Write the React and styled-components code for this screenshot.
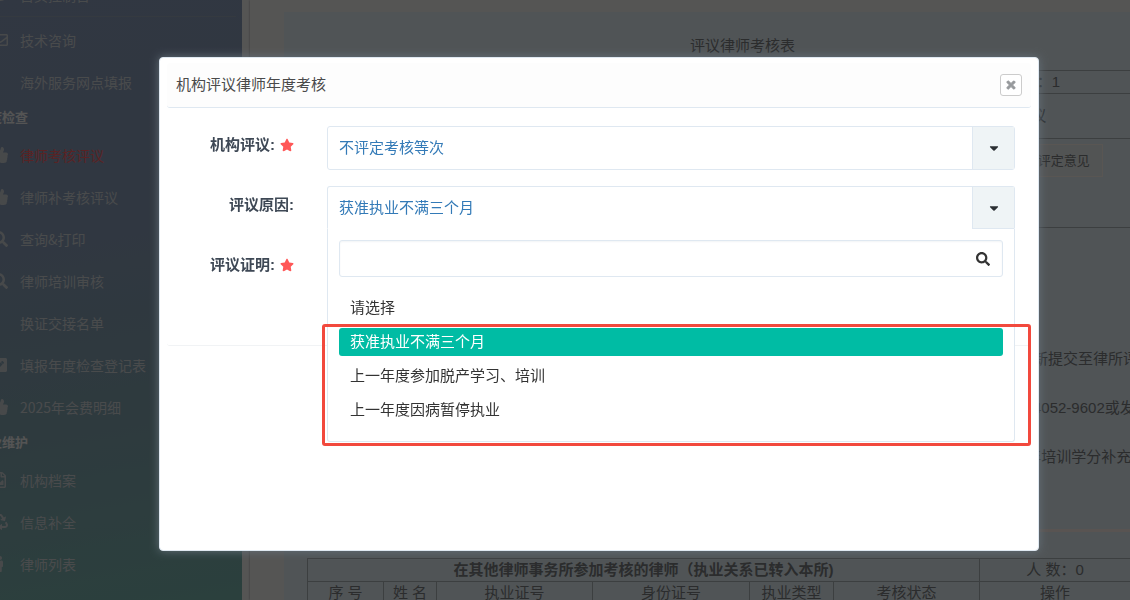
import React, { useState } from 'react';
import styled, { createGlobalStyle } from 'styled-components';
import {
  FaCaretDown,
  FaComment,
  FaMale,
  FaPenSquare,
  FaRecycle,
  FaRegEnvelope,
  FaRegFileImage,
  FaSearch,
  FaStar,
  FaThumbsUp,
  FaTimes,
} from 'react-icons/fa';

const GlobalStyle = createGlobalStyle`
  * {
    box-sizing: border-box;
  }
  body {
    margin: 0;
    overflow: hidden;
    font-family: 'Liberation Sans', 'Noto Sans CJK SC', sans-serif;
    font-size: 15px;
    line-height: 22px;
    color: #333;
  }
  button, input, select {
    font: inherit;
    color: inherit;
  }
`;

const Page = styled.div`
  display: flex;
  height: 100vh;
  overflow: hidden;
  background: #f3f2f1;
`;

const Sidebar = styled.nav`
  flex: 0 0 242px;
  overflow: hidden;
  font-family: 'Noto Sans CJK SC', sans-serif;
  background: linear-gradient(170deg, #8c9dbc 0%, #8a9fb9 40%, #84a6b2 68%, #7cb8b0 100%);

  ul {
    list-style: none;
    margin: -26px 0 0;
    padding: 0;
  }
`;

const NavLink = styled.a`
  display: flex;
  align-items: center;
  gap: 12px;
  height: 42px;
  margin-left: -8px;
  font-size: 14px;
  white-space: nowrap;
  text-decoration: none;
  color: ${({ $active }) => ($active ? '#ff6468' : '#d2d6da')};

  svg {
    width: 16px;
    height: 16px;
    color: #ccd0d4;
  }
`;

const NavIcon = styled.span`
  display: flex;
  width: 16px;
`;

const NavDivider = styled.li`
  height: 3px;
  margin-right: 6px;
  border-top: 1px solid #99a6b8;
`;

const NavTitle = styled.li`
  display: flex;
  height: 31px;
  margin-left: -24px;
  font-size: 13px;
  font-weight: 700;
  line-height: 28px;
  color: #f0f0f0;
`;

const Main = styled.main`
  flex: 1;
  min-width: 0;
  margin-left: 8px;
  padding: 12px 0 0 34px;
  overflow: hidden;
  box-shadow: 0 0 2px #9a9a9a;
`;

const Sheet = styled.section`
  padding-left: 23px;
  min-height: 100%;
  background: #e5f0f6;
  color: #7c7f82;
`;

const SheetTitle = styled.h1`
  margin: 0;
  padding: 23px 0 13px 48px;
  font-size: 15px;
  font-weight: 400;
  text-align: center;
`;

const SheetTable = styled.table`
  width: 100%;
  table-layout: fixed;
  border-collapse: collapse;

  th,
  td {
    height: 23px;
    padding: 0;
    border: 1px solid #adb4b8;
    border-right: 0;
    text-align: center;
    font-weight: 400;
    line-height: 22px;
  }
  th[colspan] {
    font-weight: 700;
  }
`;

const ReviewRow = styled.tr`
  && td {
    height: 45px;
  }
`;

const ActionRow = styled.tr`
  && td {
    height: 89px;
    padding-top: 5px;
    vertical-align: top;
  }
`;

const OpinionButton = styled.button`
  height: 33px;
  padding: 0 12px;
  border: 1px solid #fff5ee;
  background: #ecefef;
  font-size: 13px;
`;

const Notes = styled.div`
  margin-top: 106px;
  padding-left: 711px;
  line-height: 49px;
  white-space: nowrap;
  overflow: hidden;

  p {
    margin: 0;
  }
`;

const Separator = styled.hr`
  height: 3px;
  margin: 48px 0 26px;
  border: 0;
  background: #fff0ea;
`;

const Backdrop = styled.div`
  position: fixed;
  inset: 0;
  display: flex;
  align-items: flex-start;
  padding: 57px 91px 49px 159px;
  background: rgba(0, 0, 0, 0.65);
`;

const Modal = styled.section`
  flex: 1;
  min-width: 0;
  min-height: 494px;
  padding: 5px 7px;
  border: 1px solid #dfe8f1;
  border-radius: 4px;
  background: #fff;
  box-shadow: 0 0 10px #65717a;
`;

const ModalHeader = styled.header`
  display: flex;
  align-items: center;
  justify-content: space-between;
  height: 45px;
  padding: 0 9px 0 9px;
  border-bottom: 1px solid #dfe8f1;
  border-radius: 3px;
  background: #fdfdfd;

  h2 {
    margin: 0;
    font-size: 15px;
    font-weight: 400;
    color: #4a4a4a;
  }
`;

const CloseButton = styled.button`
  display: flex;
  align-items: center;
  justify-content: center;
  width: 22px;
  height: 22px;
  padding: 0;
  border: 1px solid #ccc;
  border-radius: 3px;
  background: #fff;
  color: #96999c;
  cursor: pointer;

  svg {
    stroke: currentColor;
    stroke-width: 40px;
  }
`;

const Form = styled.form`
  display: flex;
  flex-direction: column;
  gap: 16px;
  padding: 18px 16px 55px;
  border-bottom: 1px solid #f1f3f5;
  border-radius: 3px;
`;

const FormRow = styled.div`
  display: grid;
  grid-template-columns: 111px 1fr;
  column-gap: 33px;
  min-height: 44px;
`;

const Label = styled.label`
  display: flex;
  align-items: center;
  justify-content: flex-end;
  gap: 5px;
  height: 38px;
  font-weight: 700;
  color: #3e4855;

  svg {
    color: #ff5757;
  }
`;

const Field = styled.div`
  position: relative;
`;

const SelectBox = styled.div`
  display: grid;
  grid-template-columns: 1fr 42px;
  height: ${({ $open }) => ($open ? '43px' : '44px')};
  border: 1px solid #dfe8f1;
  border-bottom-color: ${({ $open }) => ($open ? '#fff' : '#dfe8f1')};
  border-radius: ${({ $open }) => ($open ? '3px 3px 0 0' : '3px')};

  select {
    grid-area: 1 / 1 / 2 / 3;
    width: 100%;
    padding: 0 54px 0 11px;
    border: 0;
    outline: 0;
    appearance: none;
    background: transparent;
    color: #337ab7;
    cursor: pointer;
  }
`;

const Caret = styled.span`
  grid-area: 1 / 2 / 2 / 3;
  display: flex;
  align-items: center;
  justify-content: center;
  border-left: 1px solid #dfe8f1;
  background: #eff4f6;
  color: #2b2f33;
  box-shadow: ${({ $open }) => ($open ? '0 1px 0 #dfe8f1' : 'none')};
  pointer-events: none;
`;

const DropPanel = styled.div`
  position: absolute;
  top: 43px;
  left: 0;
  right: 0;
  padding: 11px 11px 17px;
  border: 1px solid #dfe8f1;
  border-top: 0;
  border-radius: 0 0 3px 3px;
  background: #fff;
  z-index: 1;
`;

const SearchBox = styled.div`
  display: flex;
  align-items: center;
  height: 37px;
  margin-bottom: 17px;
  padding-right: 12px;
  border: 1px solid #dfe8f1;
  border-radius: 3px;
  box-shadow: inset 0 1px 2px #f2f4f6;

  input {
    flex: 1;
    height: 100%;
    padding: 0 11px;
    border: 0;
    outline: 0;
    background: transparent;
  }
`;

const OptionList = styled.ul`
  display: flex;
  flex-direction: column;
  gap: 6px;
  margin: 0;
  padding: 0;
  list-style: none;
`;

const Option = styled.li`
  height: 28px;
  padding: 0 11px;
  border-radius: 3px;
  line-height: 28px;
  background: ${({ $selected }) => ($selected ? '#00bca4' : 'transparent')};
  color: ${({ $selected }) => ($selected ? '#fff' : '#333')};
  cursor: pointer;
`;

const Highlight = styled.div`
  position: absolute;
  top: 95px;
  bottom: -5px;
  left: -6px;
  right: -17px;
  border: 3px solid #f2493d;
  border-radius: 3px;
  pointer-events: none;
`;

const menu = [
  { text: '首页控制台', icon: FaComment },
  { divider: true },
  { text: '技术咨询', icon: FaRegEnvelope },
  { text: '海外服务网点填报' },
  { title: '年度检查' },
  { text: '律师考核评议', icon: FaThumbsUp, active: true },
  { text: '律师补考核评议', icon: FaThumbsUp },
  { text: '查询&打印', icon: FaSearch },
  { text: '律师培训审核', icon: FaSearch },
  { text: '换证交接名单' },
  { text: '填报年度检查登记表', icon: FaPenSquare },
  { text: '2025年会费明细', icon: FaThumbsUp },
  { title: '企业维护' },
  { text: '机构档案', icon: FaRegFileImage },
  { text: '信息补全', icon: FaRecycle },
  { text: '律师列表', icon: FaMale },
];

const results = ['不评定考核等次'];

const reasons = [
  '请选择',
  '获准执业不满三个月',
  '上一年度参加脱产学习、培训',
  '上一年度因病暂停执业',
];

const SideMenu = () => (
  <Sidebar>
    <ul>
      {menu.map((item, index) => {
        if (item.divider) return <NavDivider key={index} />;
        if (item.title) return <NavTitle key={index}>{item.title}</NavTitle>;
        const Icon = item.icon;
        return (
          <li key={index}>
            <NavLink href="#" $active={item.active}>
              <NavIcon>{Icon ? <Icon /> : null}</NavIcon>
              {item.text}
            </NavLink>
          </li>
        );
      })}
    </ul>
  </Sidebar>
);

const ReviewSheet = () => (
  <Main>
    <Sheet>
      <SheetTitle>评议律师考核表</SheetTitle>
      <SheetTable>
        <colgroup>
          <col />
          <col width="198" />
        </colgroup>
        <tbody>
          <tr>
            <td></td>
            <td>人 数：1</td>
          </tr>
          <ReviewRow>
            <td></td>
            <td>评议</td>
          </ReviewRow>
          <ActionRow>
            <td></td>
            <td>
              <OpinionButton type="button">填写本机构评定意见</OpinionButton>
            </td>
          </ActionRow>
        </tbody>
      </SheetTable>
      <Notes>
        <p>重新提交至律所评议</p>
        <p>拨4052-9602或发送</p>
        <p>5年培训学分补充</p>
      </Notes>
      <Separator />
      <SheetTable>
        <colgroup>
          <col width="76" />
          <col width="53" />
          <col width="156" />
          <col width="157" />
          <col width="84" />
          <col width="146" />
          <col />
        </colgroup>
        <tbody>
          <tr>
            <th colSpan={6}>在其他律师事务所参加考核的律师（执业关系已转入本所)</th>
            <td>人 数：0</td>
          </tr>
          <tr>
            <th>序 号</th>
            <th>姓 名</th>
            <th>执业证号</th>
            <th>身份证号</th>
            <th>执业类型</th>
            <th>考核状态</th>
            <th>操作</th>
          </tr>
        </tbody>
      </SheetTable>
    </Sheet>
  </Main>
);

const ReasonSelect = () => {
  const [open, setOpen] = useState(true);
  const [reason, setReason] = useState(reasons[1]);
  const [keyword, setKeyword] = useState('');

  function toggle(event) {
    event.preventDefault();
    setOpen(!open);
  }

  function choose(value) {
    setReason(value);
    setOpen(false);
  }

  return (
    <Field>
      <SelectBox $open={open}>
        <Caret $open={open}>
          <FaCaretDown size={14} />
        </Caret>
        <select
          id="reason"
          value={reason}
          onMouseDown={toggle}
          onChange={(event) => setReason(event.target.value)}
        >
          {reasons.map((item) => (
            <option key={item}>{item}</option>
          ))}
        </select>
      </SelectBox>
      {open ? (
        <DropPanel>
          <SearchBox>
            <input
              type="text"
              aria-label="搜索"
              value={keyword}
              onChange={(event) => setKeyword(event.target.value)}
            />
            <FaSearch size={14} />
          </SearchBox>
          <OptionList role="listbox">
            {reasons
              .filter((item) => item.includes(keyword))
              .map((item) => (
                <Option
                  key={item}
                  role="option"
                  aria-selected={item === reason}
                  $selected={item === reason}
                  onClick={() => choose(item)}
                >
                  {item}
                </Option>
              ))}
          </OptionList>
          <Highlight />
        </DropPanel>
      ) : null}
    </Field>
  );
};

const App = () => {
  const [modalOpen, setModalOpen] = useState(true);

  return (
    <>
      <GlobalStyle />
      <Page>
        <SideMenu />
        <ReviewSheet />
      </Page>
      {modalOpen ? (
        <Backdrop>
          <Modal role="dialog" aria-labelledby="modal-title">
            <ModalHeader>
              <h2 id="modal-title">机构评议律师年度考核</h2>
              <CloseButton
                type="button"
                aria-label="关闭"
                onClick={() => setModalOpen(false)}
              >
                <FaTimes size={12} />
              </CloseButton>
            </ModalHeader>
            <Form>
              <FormRow>
                <Label htmlFor="result">
                  机构评议: <FaStar size={14} />
                </Label>
                <Field>
                  <SelectBox>
                    <Caret>
                      <FaCaretDown size={14} />
                    </Caret>
                    <select id="result">
                      {results.map((item) => (
                        <option key={item}>{item}</option>
                      ))}
                    </select>
                  </SelectBox>
                </Field>
              </FormRow>
              <FormRow>
                <Label htmlFor="reason">评议原因:</Label>
                <ReasonSelect />
              </FormRow>
              <FormRow>
                <Label as="span">
                  评议证明: <FaStar size={14} />
                </Label>
              </FormRow>
            </Form>
          </Modal>
        </Backdrop>
      ) : null}
    </>
  );
};

export default App;
